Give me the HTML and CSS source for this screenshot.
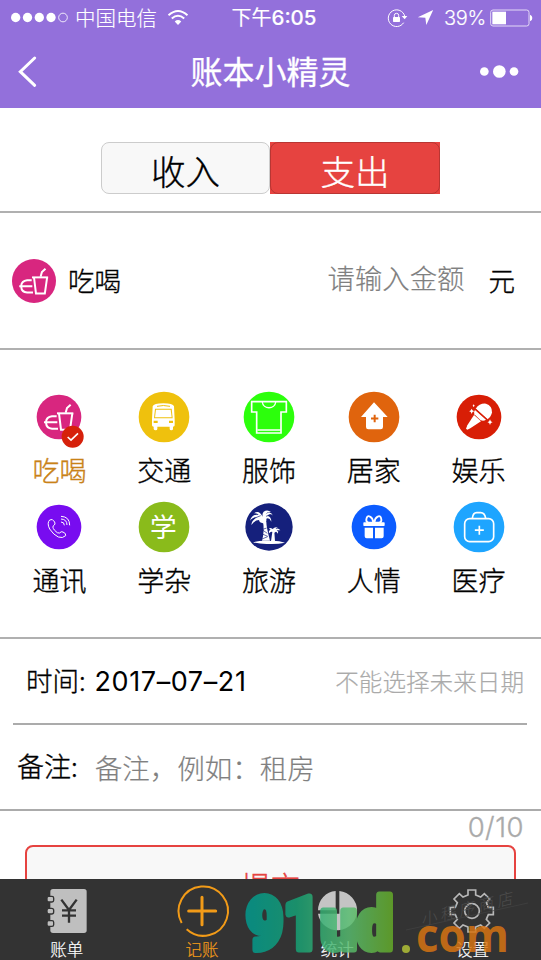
FILE: index.html
```html
<!DOCTYPE html>
<html lang="zh-CN">
<head>
<meta charset="utf-8">
<title>账本小精灵</title>
<link rel="stylesheet" href="styles.css">
</head>
<body>
<div class="app">
  <header class="header">
    <div class="status">
      <div class="status-left">
        <svg class="signal" viewBox="30 36 177 32"><g fill="#fff"><circle cx="47" cy="52" r="14"/><circle cx="82.500" cy="52" r="14"/><circle cx="118" cy="52" r="14"/><circle cx="153" cy="52" r="14"/></g><circle cx="189" cy="52" r="13" fill="none" stroke="#fff" stroke-width="2.500"/></svg>
        <span class="carrier">中国电信</span>
        <svg class="wifi" viewBox="501 24 66 52"><g fill="none" stroke="#fff" stroke-width="6"><path d="M505 43Q534 17 563 43"/><path d="M515 53Q534 36 553 53"/></g><path d="M524 62Q534 54 544 62L534 73Z" fill="#fff"/></svg>
      </div>
      <div class="time">下午<b>6:05</b></div>
      <div class="status-right">
        <svg class="lock" viewBox="351 22 63 60"><path d="M401 66A25 25 0 1 1 404 46" fill="none" stroke="#fff" stroke-width="3"/><path d="M395 46h17l-8 10z" fill="#fff"/><rect x="369" y="49" width="21" height="15" rx="2" fill="#fff"/><path d="M373 50v-6q0-6 6.500-6t6.500 6v6" fill="none" stroke="#fff" stroke-width="3"/></svg>
        <svg class="arrow" viewBox="441 26 51 52"><path d="M490 29L443 51L466 53L469 75Z" fill="#fff"/></svg>
        <span class="percent">39%</span>
        <svg class="battery" viewBox="659 25 129 54"><rect x="661" y="28" width="115" height="48" rx="7" fill="none" stroke="#e3d9f6" stroke-width="3"/><path d="M666 33h41v38h-41z" fill="#fff"/><path d="M779 42q7 2 7 10t-7 10z" fill="#fff"/></svg>
      </div>
    </div>
    <div class="nav">
      <svg class="back" viewBox="53 165 57 93"><path d="M103 171L60 212L103 253" fill="none" stroke="#fff" stroke-width="9" stroke-linecap="round"/></svg>
      <h1>账本小精灵</h1>
      <svg class="more" viewBox="627 193 120 44"><g fill="#fff"><circle cx="643" cy="215" r="13"/><circle cx="688" cy="215" r="19"/><circle cx="732" cy="215" r="13"/></g></svg>
    </div>
  </header>

  <main class="content">
    <section class="toggle">
      <div class="tab-income">收入</div>
      <div class="tab-expense"><span>支出</span></div>
    </section>

    <section class="amount">
      <svg class="amount-icon" viewBox="80 45 134 134"><use href="#food"/></svg>
      <span class="amount-label">吃喝</span>
      <span class="amount-input">请输入金额</span>
      <span class="amount-unit">元</span>
    </section>

    <section class="grid">
      <div class="item selected">
        <svg viewBox="69 34 156 156">
          <g id="food"><circle cx="147" cy="112" r="67" fill="#d8267f"/>
          <g fill="none" stroke="#fff"><path d="M141 101H190" stroke-width="6"/><path d="M147 101L153 150H180L187 101" stroke-width="6"/><path d="M167 99L171 85L182 75" stroke-width="6"/><path d="M140 110H126Q109 112 108 127M102 128H142M108 129Q109 146 126 147H144" stroke-width="6"/></g></g>
          <circle cx="188" cy="171" r="33" fill="#d6210b"/><path d="M173 172L183 181L204 161" fill="none" stroke="#fff" stroke-width="5"/>
        </svg><span>吃喝</span>
      </div>
      <div class="item">
        <svg viewBox="385 34 156 156"><circle cx="463" cy="112" r="76" fill="#efc10d"/><path d="M429 80Q432 71 461 71T493 80L495 120V137Q495 141 490 141V148Q490 152 485 152T480 148V141H443V148Q443 152 438 152T432 148V141Q427 141 427 137V120Z" fill="#fff"/><path d="M436 87H486L489 116H433Z" fill="#efc10d"/><path d="M439 90H483L486 113H436Z" fill="#fff"/><path d="M442 80Q461 75 481 80" fill="none" stroke="#efc10d" stroke-width="3"/><path d="M432 123h12v7h-12zM478 123h12v7h-12z" fill="#efc10d"/></svg><span>交通</span>
      </div>
      <div class="item">
        <svg viewBox="159 34 156 156"><circle cx="237" cy="112" r="76" fill="#2cff0c"/><g fill="none" stroke="#fff" stroke-width="5"><path d="M185 66H289V97H273V160H200V97H185Z"/><path d="M217 67C219 90 255 90 257 67M202 151H272" stroke-width="4"/></g></svg><span>服饰</span>
      </div>
      <div class="item">
        <svg viewBox="23 34 156 156"><circle cx="101" cy="112" r="76" fill="#e0640d"/><path d="M101 68L142 112H128V142Q128 149 121 149H84Q77 149 77 142V112H62Z" fill="#fff"/><path d="M103 105v23M92 116.500h22" stroke="#e0640d" stroke-width="6"/></svg><span>居家</span>
      </div>
      <div class="item">
        <svg viewBox="337 34 156 156"><circle cx="415" cy="112" r="67" fill="#d81e06"/><g fill="#fff"><path d="M405 87Q417 70 436 72Q455 78 454 98Q452 112 440 119Z"/><path d="M403 91L436 120Q428 126 419 121L401 104Q398 97 403 91Z"/><path d="M400 106L421 125L389 146L380 150L376 147L380 137Z"/><path d="M393 87l2.500 5 5 2.500-5 2.500-2.500 6-2.500-6-5-2.500 5-2.500zM448 119l2.500 6 5 2.500-5 2.500-2.500 6-2.500-6-5-2.500 5-2.500zM399 74l3 4-3 4-3-4z"/></g><path d="M404 88L439 119" stroke="#d81e06" stroke-width="3.500"/></svg><span>娱乐</span>
      </div>
      <div class="item">
        <svg viewBox="69 364 156 156"><circle cx="147" cy="442" r="67" fill="#780cf0"/><g fill="none" stroke="#fff" stroke-width="3"><path d="M119 421Q110 430 119 448Q131 466 145 472Q158 477 167 468Q169 461 159 457Q153 454 149 460Q143 463 133 451Q125 441 132 437Q137 434 134 427Q127 415 119 421Z"/><path d="M153 410Q179 411 179 437M153 418Q171 419 171 436M153 427Q163 427 163 437"/></g></svg><span>通讯</span>
      </div>
      <div class="item">
        <svg viewBox="385 364 156 156"><circle cx="463" cy="442" r="76" fill="#8abb1b"/><text class="glyph" x="461" y="471" text-anchor="middle">学</text></svg><span>学杂</span>
      </div>
      <div class="item">
        <svg viewBox="159 364 156 156"><circle cx="237" cy="442" r="71" fill="#15207c"/><g fill="#fff"><path d="M189 488Q212 482 237 484Q264 482 285 489Q263 494 237 493Q211 494 189 488Z"/><path d="M219 425L229 427Q229 442 240 483H216Q224 455 219 425ZM247 457h6l2 28h-12z"/><path d="M218 411Q207 389 192 401Q202 399 206 406Q186 402 180 423Q188 412 201 413Q185 421 184 436Q193 422 207 421Q208 429 219 431Q231 433 229 417Q238 413 244 426Q244 411 232 408Q242 400 249 408Q241 391 227 404Q231 396 243 397Q232 388 221 396Q216 401 218 411Z"/><path d="M248 448Q240 442 237 447L242 450Q235 452 237 461Q242 454 248 457L254 459Q260 453 262 462L265 456L260 452H271Q265 444 257 448Q260 442 265 445Q256 439 248 448Z"/></g><path d="M218 449l12-4M217 463l16 7M219 452l13 9M216 478l17-7M212 408l-22 9M228 410l14-5" stroke="#15207c" stroke-width="2"/></svg><span>旅游</span>
      </div>
      <div class="item">
        <svg viewBox="23 364 156 156"><circle cx="101" cy="442" r="67" fill="#0c5cff"/><g fill="#fff"><rect x="69" y="428" width="64" height="11" rx="2"/><path d="M73 444H98V476H79Q73 476 73 470ZM104 444H130V470Q130 476 124 476H104Z"/></g><path d="M99 428Q76 433 78 419Q80 406 89 411Q97 415 99 428ZM102 428Q125 433 123 419Q121 406 112 411Q104 415 102 428Z" fill="none" stroke="#fff" stroke-width="5.500"/></svg><span>人情</span>
      </div>
      <div class="item">
        <svg viewBox="337 364 156 156"><circle cx="415" cy="442" r="76" fill="#1ea5ff"/><g fill="none" stroke="#fff" stroke-width="5"><rect x="372" y="417" width="87" height="69" rx="15"/><path d="M395 416Q397 399 408 399H420Q432 399 435 416"/><path d="M416 438v27M402.500 451.500h27"/></g></svg><span>医疗</span>
      </div>
    </section>

    <section class="date">
      <span>时间: <b>2017–07–21</b></span>
      <span class="hint">不能选择未来日期</span>
    </section>
    <section class="note">
      <span class="note-label">备注:</span>
      <span class="note-input">备注，例如：租房</span>
    </section>
    <div class="counter">0/10</div>
    <div class="submit">提交</div>
  </main>

  <footer class="tabbar">
    <div class="tab">
      <svg viewBox="123 162 156 162"><rect x="151" y="177" width="109" height="132" rx="8" fill="#bfbfbf"/><g fill="#bfbfbf" stroke="#333" stroke-width="4"><rect x="141" y="199" width="20" height="17" rx="5"/><rect x="141" y="235" width="20" height="17" rx="6"/><rect x="141" y="272" width="20" height="17" rx="5"/></g><path d="M184 209L207 240L230 209M207 238V278M186 241H228M186 257H228" fill="none" stroke="#333" stroke-width="7"/></svg>
      <span>账单</span>
    </div>
    <div class="tab active">
      <svg viewBox="528 162 156 162"><path d="M545 279A74 74 0 1 1 560 298" fill="none" stroke="#f29b18" stroke-width="6"/><path d="M606 202V284M566 243H647" stroke="#f29b18" stroke-width="9" stroke-linecap="round"/></svg>
      <span>记账</span>
    </div>
    <div class="tab">
      <svg viewBox="244 162 156 162"><path d="M318 183V241H265A56 59 0 0 1 318 183ZM329 183A59 59 0 1 1 265 251H329Z" fill="#c4c4c4"/></svg>
      <span>统计</span>
    </div>
    <div class="tab">
      <svg viewBox="650 162 156 162"><g fill="none" stroke="#b8b8b8" stroke-width="5"><path d="M716 180H739V195L754 201L765 191L781 207L771 218L777 232H792V254H777L771 268L781 279L765 295L754 285L739 291V306H716V291L701 285L690 295L674 279L684 268L678 254H663V232H678L684 218L674 207L690 191L701 201L716 195Z"/><circle cx="728" cy="243" r="22"/></g></svg>
      <span>设置</span>
    </div>
    <svg class="watermark" viewBox="0 0 311 81">
      <defs><linearGradient id="wm" gradientUnits="userSpaceOnUse" x1="14" y1="0" x2="164" y2="0"><stop offset="0" stop-color="#009b91"/><stop offset=".35" stop-color="#16a276"/><stop offset=".7" stop-color="#58bd70"/><stop offset="1" stop-color="#66ac26"/></linearGradient></defs>
      <text class="store" x="192" y="47" transform="rotate(-14 192 47)" textLength="94">小程序商店</text>
      <path d="M176 51L298 24" stroke="#444" stroke-width=".7"/>
      <g opacity=".83">
        <text class="wm-main" x="16" y="70" textLength="147" lengthAdjust="spacingAndGlyphs" fill="url(#wm)" stroke="url(#wm)">91ud</text>
        <circle cx="176" cy="70" r="4" fill="#b4c437"/>
        <text class="wm-com" x="186" y="73" textLength="93" lengthAdjust="spacingAndGlyphs">com</text>
      </g>
    </svg>
  </footer>
</div>
</body>
</html>
```

FILE: styles.css
```css
* { box-sizing: border-box; }
body {
  margin: 0;
  background: #fff;
  color: #000;
  font-family: "Noto Sans CJK SC", sans-serif;
  font-weight: 300;
  -webkit-text-stroke: .35px currentColor;
}
svg { display: block; overflow: visible; flex: none; -webkit-text-stroke: 0; }
.app { width: 541px; height: 960px; display: flex; flex-direction: column; overflow: hidden; }

.header { height: 108px; flex: none; background: #9370db; color: #fff; }
.status { height: 35px; display: grid; grid-template-columns: 190px 168px 183px; align-items: center; font-size: 20px; line-height: 34px; -webkit-text-stroke-width: .15px; }
.status-left { display: flex; align-items: center; padding-left: 10px; }
.signal { width: 59px; height: 11px; }
.carrier { margin-left: 6px; font-size: 20.500px; line-height: 32px; padding-bottom: 2px; }
.wifi { width: 22px; height: 17px; margin-left: 10px; }
.time { text-align: center; font-weight: 400; }
.time b { font-family: Inter, sans-serif; font-weight: 500; font-size: 20.500px; }
.status-right { display: flex; align-items: center; justify-content: flex-end; padding-right: 8px; }
.lock { width: 21px; height: 20px; }
.arrow { width: 17px; height: 17px; margin-left: 9px; }
.percent { font-family: Inter, sans-serif; font-weight: 300; margin: 0 5px 0 10px; width: 41px; letter-spacing: -.3px; white-space: nowrap; }
.battery { width: 43px; height: 18px; }
.nav { height: 72px; display: grid; grid-template-columns: 100px 1fr 100px; align-items: center; }
.back { width: 19px; height: 31px; margin-left: 18px; }
.nav h1 { margin: 0; text-align: center; font-size: 32px; font-weight: 400; line-height: 70px; padding-bottom: 2px; -webkit-text-stroke-width: .3px; }
.more { width: 40px; height: 15px; margin-left: 38px; }

.content { flex: 1; min-height: 0; overflow: hidden; }
.toggle { height: 105px; padding: 34px 101px 0; display: flex; border-bottom: 2px solid #b0b0b0; font-size: 34.500px; line-height: 55px; text-align: center; }
.tab-income { width: 169px; height: 52px; background: #f8f8f8; border: 1px solid #ccc; border-radius: 8px; }
.tab-expense { width: 170px; height: 52px; background: #e64340; color: #fff; }
.tab-expense span { display: block; height: 52px; border: 1px solid #b83633; border-radius: 8px; }

.amount { height: 137px; padding: 0 26px 0 12px; display: flex; align-items: center; border-bottom: 2px solid #b0b0b0; font-size: 26.500px; }
.amount-icon { width: 44px; height: 44px; }
.amount-label { margin-left: 12px; padding-bottom: 3px; }
.amount-input { margin-left: auto; color: #808080; font-size: 27.400px; padding-bottom: 7px; -webkit-text-stroke-width: .2px; }
.amount-unit { margin-left: 24px; padding-bottom: 2px; }

.grid { height: 289px; padding: 41px 10px 0 7px; display: grid; grid-template-columns: repeat(5, 1fr); grid-auto-rows: 110px; border-bottom: 2px solid #b0b0b0; }
.item { display: flex; flex-direction: column; align-items: center; font-size: 27px; line-height: 40px; }
.item svg { width: 52px; height: 52px; }
.item span { margin-top: 7px; }
.selected span { color: #c98218; }
.glyph { font-size: 80px; fill: #fff; font-weight: 400; }

.date { height: 86px; margin: 0 14px 0 13px; padding: 0 3px 0 13px; display: flex; align-items: center; justify-content: space-between; border-bottom: 2px solid #ababab; font-size: 26.500px; white-space: nowrap; }
.date > span:first-child { padding-bottom: 4px; }
.date b { margin-left: 3px; font-family: Inter, sans-serif; font-weight: 400; font-size: 27px; letter-spacing: .6px; -webkit-text-stroke-width: 0; }
.date .hint { font-size: 23.600px; color: #aaa; -webkit-text-stroke-width: .2px; }
.note { height: 86px; padding-left: 17px; display: flex; align-items: center; border-bottom: 2px solid #ababab; font-size: 27px; }
.note-label { padding-bottom: 4px; }
.note-input { margin-left: 17px; font-size: 27.500px; color: #808080; -webkit-text-stroke-width: .2px; }
.counter { height: 34px; padding-right: 17px; text-align: right; font: 300 27.500px/33px Inter, sans-serif; letter-spacing: .5px; color: #aaa; }
.submit { height: 90px; margin: 0 25px; border: 2px solid #e64340; border-radius: 8px; background: #f8f8f8; color: #e64340; text-align: center; font-size: 30px; line-height: 76px; }

.tabbar { height: 81px; flex: none; background: #333; display: grid; grid-template-columns: repeat(4, 1fr); position: relative; color: #fff; -webkit-text-stroke-width: .2px; }
.tab { display: flex; flex-direction: column; align-items: center; font-size: 16.500px; line-height: 24px; padding: 5px 2px 0 0; }
.tab svg { width: 52px; height: 54px; }
.tab span { margin-top: -1px; }
.active { color: #f29b18; }
.watermark { position: absolute; left: 230px; top: 0; width: 311px; height: 81px; }
.store { font-size: 16px; fill: #4c4c4c; font-style: italic; }
.wm-main { font-family: Roboto, sans-serif; font-weight: 900; font-size: 73px; stroke-width: 7px; stroke-linejoin: round; }
.wm-com { font-family: "Open Sans", sans-serif; font-weight: 700; font-size: 46px; fill: #da7512; }
```
